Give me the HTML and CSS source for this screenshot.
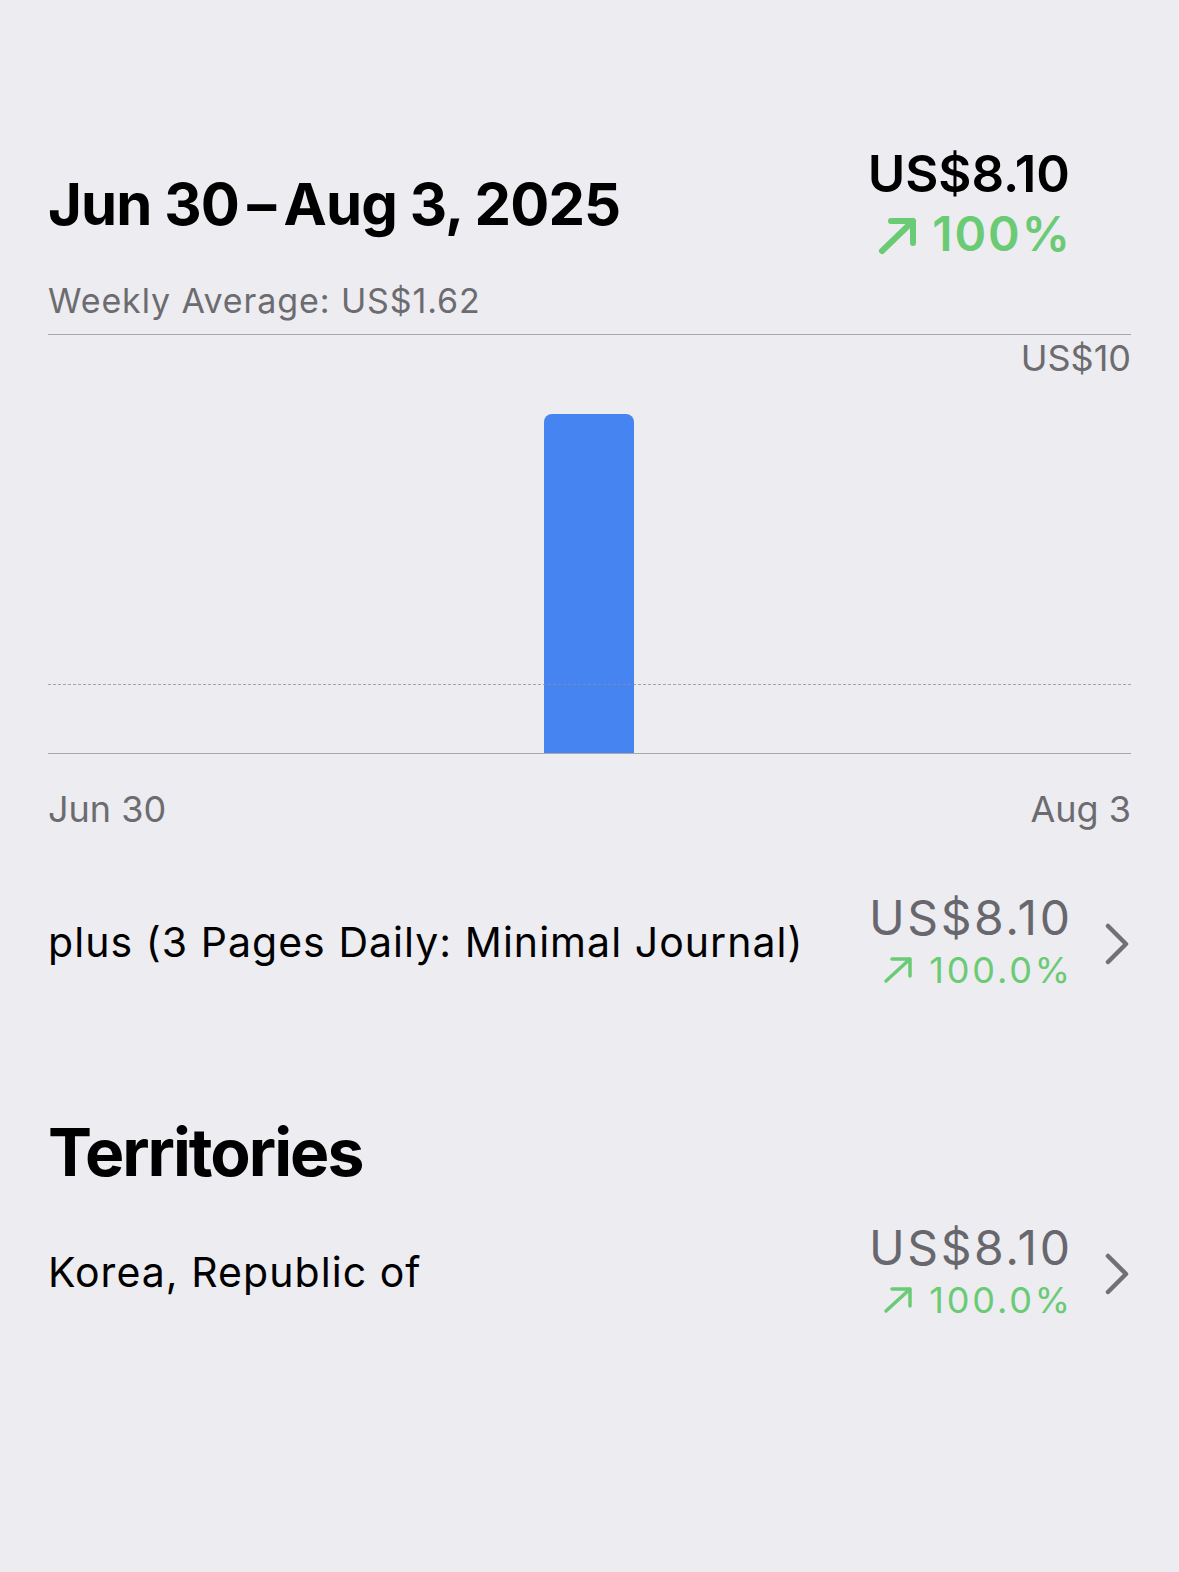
FILE: index.html
```html
<!DOCTYPE html>
<html lang="en">
<head>
<meta charset="utf-8">
<title>Proceeds</title>
<link rel="stylesheet" href="styles.css">
</head>
<body>
<main class="page">
  <header class="header">
    <h1 class="range">Jun 30&#8201;–&#8201;Aug 3, 2025</h1>
    <div class="summary">
      <div class="summary-amount">US$8.10</div>
      <div class="summary-change">
        <svg class="arrow-lg" width="42" height="40" viewBox="0 0 42 40" aria-hidden="true"><path d="M5 35 L36 5 M14 5 H36 V27" fill="none" stroke="currentColor" stroke-width="6" stroke-linecap="round" stroke-linejoin="round"/></svg>
        <span class="tight">100%</span>
      </div>
    </div>
  </header>
  <p class="weekly">Weekly Average: US$1.62</p>

  <section class="chart">
    <span class="y-label">US$10</span>
    <div class="avg-line" style="bottom: 16.2%"></div>
    <div class="col"></div>
    <div class="col"></div>
    <div class="col"><div class="bar" style="height: 81%"></div></div>
    <div class="col"></div>
    <div class="col"></div>
  </section>
  <div class="x-labels"><span>Jun 30</span><span>Aug 3</span></div>

  <div class="row row-first">
    <div class="row-name">plus (3 Pages Daily: Minimal Journal)</div>
    <div class="row-value">
      <div class="row-amount">US$8.10</div>
      <div class="row-change">
        <svg class="arrow-sm" width="32" height="30" viewBox="0 0 32 30" aria-hidden="true"><path d="M4 26 L28 4 M10 4 H28 V21" fill="none" stroke="currentColor" stroke-width="3.5" stroke-linecap="round" stroke-linejoin="round"/></svg>
        <span class="pct">100.0%</span>
      </div>
    </div>
    <svg class="chevron" width="26" height="42" viewBox="0 0 26 42" aria-hidden="true"><path d="M3 3 L21 21 L3 39" fill="none" stroke="currentColor" stroke-width="4.5" stroke-linecap="round" stroke-linejoin="round"/></svg>
  </div>

  <h2 class="section-title">Territories</h2>

  <div class="row row-territory">
    <div class="row-name">Korea, Republic of</div>
    <div class="row-value">
      <div class="row-amount">US$8.10</div>
      <div class="row-change">
        <svg class="arrow-sm" width="32" height="30" viewBox="0 0 32 30" aria-hidden="true"><path d="M4 26 L28 4 M10 4 H28 V21" fill="none" stroke="currentColor" stroke-width="3.5" stroke-linecap="round" stroke-linejoin="round"/></svg>
        <span class="pct">100.0%</span>
      </div>
    </div>
    <svg class="chevron" width="26" height="42" viewBox="0 0 26 42" aria-hidden="true"><path d="M3 3 L21 21 L3 39" fill="none" stroke="currentColor" stroke-width="4.5" stroke-linecap="round" stroke-linejoin="round"/></svg>
  </div>
</main>
</body>
</html>
```
FILE: styles.css
```css
* { box-sizing: border-box; }

html, body {
  margin: 0;
  padding: 0;
  background: #ECECF1;
}

body {
  font-family: Inter, "Noto Sans", "Liberation Sans", sans-serif;
  color: #000;
  width: 1179px;
  height: 1572px;
  overflow: hidden;
}

.page {
  padding: 144px 48px 0 48px;
}

.header {
  display: flex;
  align-items: center;
  justify-content: space-between;
  padding-right: 61px;
}

.range {
  margin: 0;
  font-size: 58px;
  font-weight: 700;
  line-height: 80px;
  letter-spacing: -0.9px;
}

.summary {
  display: flex;
  flex-direction: column;
  align-items: flex-end;
}

.summary-amount {
  font-size: 51px;
  font-weight: 600;
  line-height: 60px;
}

.summary-change {
  display: flex;
  align-items: center;
  gap: 13px;
  color: #6ACB74;
  font-size: 48px;
  font-weight: 600;
  line-height: 60px;
}

.tight {
  letter-spacing: 2px;
  margin-right: -2px;
}

.arrow-lg { display: block; margin-top: 4px; }

.weekly {
  margin: 17px 0 0 0;
  font-size: 34px;
  line-height: 40px;
  letter-spacing: 0.9px;
  color: #6C6C70;
}

.chart {
  position: relative;
  margin-top: 13px;
  height: 420px;
  border-top: 1px solid #A8A8AC;
  border-bottom: 1px solid #A8A8AC;
  display: grid;
  grid-template-columns: repeat(5, 1fr);
  align-items: end;
}

.col {
  height: 100%;
  display: flex;
  align-items: flex-end;
  justify-content: center;
}

.bar {
  width: 90px;
  background: #4584F1;
  border-radius: 8px 8px 0 0;
}

.y-label {
  position: absolute;
  top: 3px;
  right: 0;
  font-size: 36px;
  line-height: 40px;
  color: #6C6C70;
}

.avg-line {
  position: absolute;
  left: 0;
  right: 0;
  height: 0;
  border-top: 1px dashed rgba(140, 140, 146, 0.75);
  z-index: 1;
}

.x-labels {
  display: flex;
  justify-content: space-between;
  margin-top: 33px;
  font-size: 36px;
  line-height: 44px;
  color: #6C6C70;
}

.row {
  display: flex;
  align-items: center;
}

.row-first { margin-top: 61px; }
.row-territory { margin-top: 30px; }

.row-name {
  flex: 1;
  font-size: 41px;
  line-height: 50px;
  letter-spacing: 1.05px;
  padding-bottom: 4px;
}

.row-value {
  display: flex;
  flex-direction: column;
  align-items: flex-end;
}

.row-amount {
  font-size: 48px;
  line-height: 52px;
  letter-spacing: 2.6px;
  margin-right: -2.6px;
  color: #68676D;
}

.row-change {
  display: flex;
  align-items: center;
  gap: 15px;
  font-size: 36px;
  line-height: 52px;
  color: #6ACB74;
}

.pct {
  letter-spacing: 2.8px;
  margin-right: -2.8px;
}

.arrow-sm { display: block; }

.chevron {
  display: block;
  margin-left: 35px;
  color: #707075;
}

.section-title {
  margin: 116px 0 0 0;
  font-size: 66px;
  font-weight: 700;
  line-height: 80px;
  letter-spacing: -2px;
}
```
